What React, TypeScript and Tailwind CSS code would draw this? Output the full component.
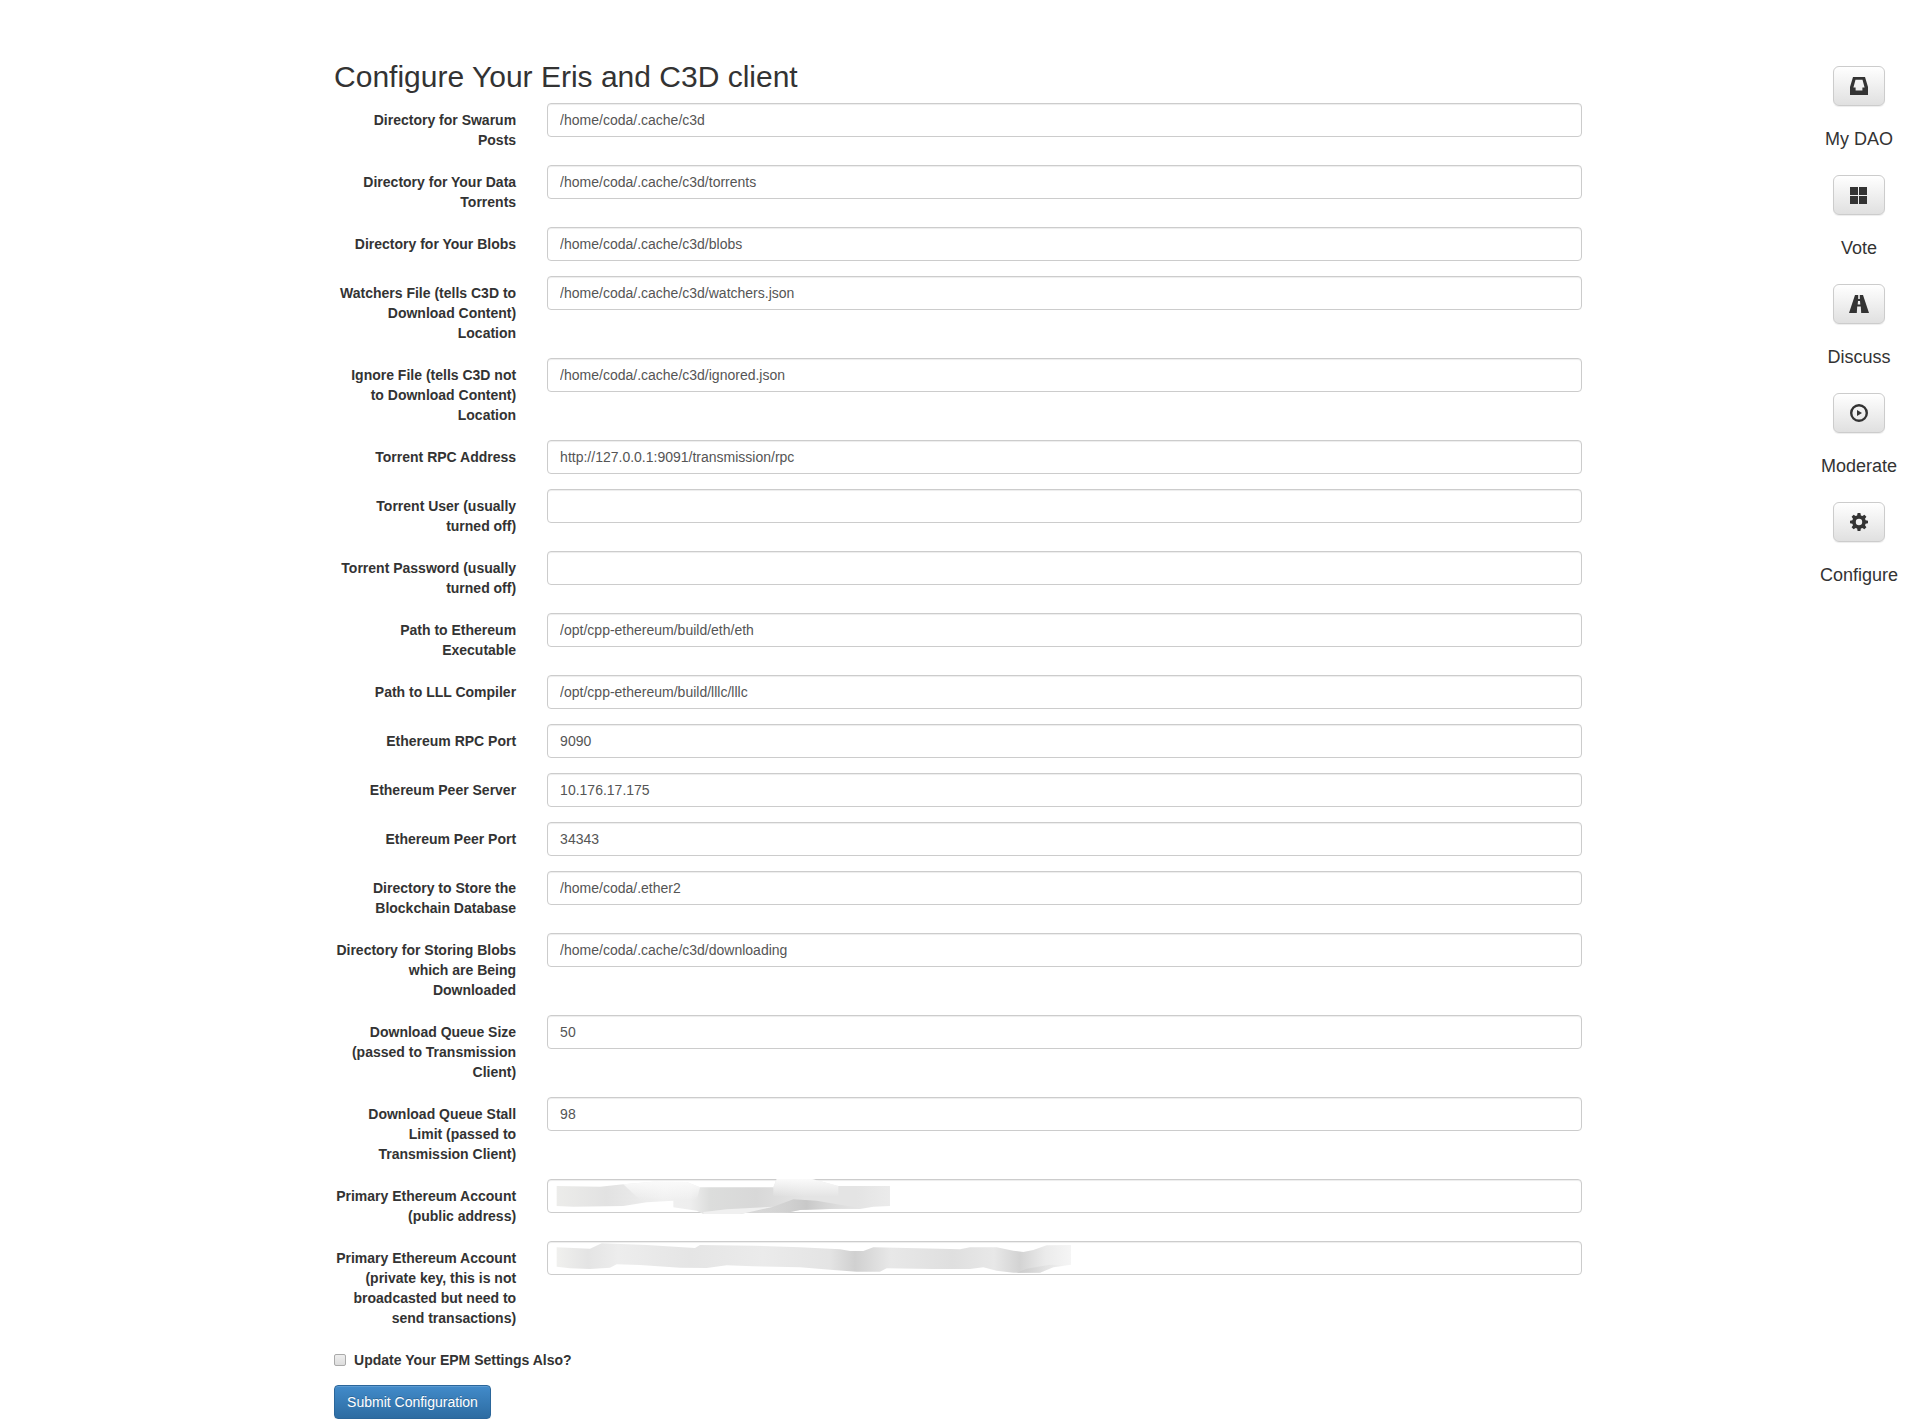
import React from 'react';

type Field = { id: string; label: string; value: string; smudge?: React.ReactNode };

const publicSmudge = (
  <svg viewBox="21 27 1080 108" className="pointer-events-none absolute top-0 left-[15px] h-9 w-[360px]" aria-hidden="true">
    <defs>
      <linearGradient id="pub" gradientUnits="userSpaceOnUse" x1="50" y1="0" x2="1050" y2="0">
        <stop offset="0" stopColor="#ececea" />
        <stop offset="0.15" stopColor="#e2e2e2" />
        <stop offset="0.32" stopColor="#f0f0f0" />
        <stop offset="0.4" stopColor="#eeeeee" />
        <stop offset="0.46" stopColor="#dcdddc" />
        <stop offset="0.6" stopColor="#d8d8d8" />
        <stop offset="0.74" stopColor="#e4e4e4" />
        <stop offset="0.9" stopColor="#e4e4e4" />
        <stop offset="1" stopColor="#ebebeb" />
      </linearGradient>
      <linearGradient id="pubTop" x1="0" y1="0" x2="0" y2="1">
        <stop offset="0" stopColor="#fafafa" />
        <stop offset="1" stopColor="#fafafa" stopOpacity="0" />
      </linearGradient>
      <linearGradient id="pubShade" x1="0" y1="0" x2="1" y2="0">
        <stop offset="0" stopColor="#c8c8c8" stopOpacity="0" />
        <stop offset="0.5" stopColor="#c8c8c8" />
        <stop offset="1" stopColor="#d8d8d8" stopOpacity="0" />
      </linearGradient>
    </defs>
    <path
      fill="url(#pub)"
      d="M50 48L180 50L250 43L340 35L440 36L480 52L700 52L710 27H816L850 36L895 48H1050V108L1000 110L960 117H870L780 120L740 128H620L600 132H490L470 122L400 112V92L320 97L250 108L100 110L50 108Z"
    />
    <path fill="url(#pubTop)" d="M250 43L340 35L440 36L480 52L470 90H300Z" />
    <path fill="url(#pubTop)" d="M700 52L710 27H816L850 36L895 48V80H700Z" />
    <path fill="url(#pubShade)" d="M640 124L700 110L760 88L830 92L900 104L960 114L870 117L780 120L740 128Z" />
    <path fill="#f0f0f0" d="M490 126L560 118L700 110L620 128L600 132H490Z" />
  </svg>
);

const privateSmudge = (
  <svg viewBox="21 213 1620 108" className="pointer-events-none absolute top-0 left-[15px] h-9 w-[540px]" aria-hidden="true">
    <defs>
      <linearGradient id="priv" gradientUnits="userSpaceOnUse" x1="50" y1="0" x2="1593" y2="0">
        <stop offset="0" stopColor="#f0f0ee" />
        <stop offset="0.06" stopColor="#e4e4e4" />
        <stop offset="0.12" stopColor="#ededed" />
        <stop offset="0.26" stopColor="#e5e5e5" />
        <stop offset="0.4" stopColor="#ebebeb" />
        <stop offset="0.53" stopColor="#e4e4e4" />
        <stop offset="0.58" stopColor="#d0d0d0" />
        <stop offset="0.65" stopColor="#e8e8e8" />
        <stop offset="0.77" stopColor="#dfdfdf" />
        <stop offset="0.85" stopColor="#e8e8e8" />
        <stop offset="0.9" stopColor="#d3d3d3" />
        <stop offset="0.95" stopColor="#ebebeb" />
        <stop offset="1" stopColor="#f5f5f5" />
      </linearGradient>
      <linearGradient id="privTail" x1="0" y1="0" x2="1" y2="0">
        <stop offset="0" stopColor="#cccccc" />
        <stop offset="1" stopColor="#e0e0e0" stopOpacity="0" />
      </linearGradient>
    </defs>
    <path
      fill="url(#priv)"
      d="M50 232L150 236L185 220L320 225L465 234L480 225L640 227L780 232L900 238L930 243H970L1000 232L1200 236L1260 238L1290 232H1370L1420 242L1450 246L1480 240L1520 226L1593 225V284L1540 292L1500 308H1420L1370 302L1330 292L1290 297H1180L1040 295L1020 305H950L880 300L780 292L640 289L560 286L500 294L420 293L300 285L230 283L210 293L150 297L90 295L50 290Z"
    />
    <path fill="url(#privTail)" d="M1430 308L1460 296L1530 284L1580 287L1540 292L1500 308Z" />
  </svg>
);

const fields: Field[] = [
  { id: 'swarum', label: 'Directory for Swarum Posts', value: '/home/coda/.cache/c3d' },
  { id: 'torrents', label: 'Directory for Your Data Torrents', value: '/home/coda/.cache/c3d/torrents' },
  { id: 'blobs', label: 'Directory for Your Blobs', value: '/home/coda/.cache/c3d/blobs' },
  { id: 'watchers', label: 'Watchers File (tells C3D to Download Content) Location', value: '/home/coda/.cache/c3d/watchers.json' },
  { id: 'ignore', label: 'Ignore File (tells C3D not to Download Content) Location', value: '/home/coda/.cache/c3d/ignored.json' },
  { id: 'rpc', label: 'Torrent RPC Address', value: 'http://127.0.0.1:9091/transmission/rpc' },
  { id: 'user', label: 'Torrent User (usually turned off)', value: '' },
  { id: 'password', label: 'Torrent Password (usually turned off)', value: '' },
  { id: 'eth', label: 'Path to Ethereum Executable', value: '/opt/cpp-ethereum/build/eth/eth' },
  { id: 'lll', label: 'Path to LLL Compiler', value: '/opt/cpp-ethereum/build/lllc/lllc' },
  { id: 'ethport', label: 'Ethereum RPC Port', value: '9090' },
  { id: 'peer', label: 'Ethereum Peer Server', value: '10.176.17.175' },
  { id: 'peerport', label: 'Ethereum Peer Port', value: '34343' },
  { id: 'chain', label: 'Directory to Store the Blockchain Database', value: '/home/coda/.ether2' },
  { id: 'downloading', label: 'Directory for Storing Blobs which are Being Downloaded', value: '/home/coda/.cache/c3d/downloading' },
  { id: 'queue', label: 'Download Queue Size (passed to Transmission Client)', value: '50' },
  { id: 'stall', label: 'Download Queue Stall Limit (passed to Transmission Client)', value: '98' },
  { id: 'public', label: 'Primary Ethereum Account (public address)', value: '', smudge: publicSmudge },
  {
    id: 'private',
    label: 'Primary Ethereum Account (private key, this is not broadcasted but need to send transactions)',
    value: '',
    smudge: privateSmudge,
  },
];

const nav = [
  {
    name: 'My DAO',
    icon: <path fillRule="evenodd" d="M3 0h12l3 10v8H0v-8zM5.500 2.800L3.400 10.500H5.600v3h6.800v-3h2.200L12.500 2.800z" />,
  },
  {
    name: 'Vote',
    icon: <path d="M0 1h8v8H0zM9 1h8v8H9zM0 10h8v8H0zM9 10h8v8H9z" />,
  },
  {
    name: 'Discuss',
    icon: (
      <path
        fillRule="evenodd"
        d="M5 0L-1 18H6.800L7.200 11.500H10.800L11.200 18H19L13 0H9.800V4H8.200V0zM8 6L7.700 9.500H10.300L10 6z"
      />
    ),
  },
  {
    name: 'Moderate',
    icon: (
      <>
        <circle cx="9" cy="9" r="7.800" fill="none" stroke="#333" strokeWidth="2.400" />
        <path d="M7 6v6l5-3z" />
      </>
    ),
  },
  {
    name: 'Configure',
    icon: (
      <path
        fillRule="evenodd"
        d="M7.600 0h2.800l.5 2.500 1.500.6 2-1.400 2 2-1.400 2 .6 1.500 2.400.5v2.600l-2.400.5-.6 1.500 1.400 2-2 2-2-1.400-1.500.6-.5 2.500H7.600l-.5-2.500-1.500-.6-2 1.400-2-2 1.400-2-.6-1.500L0 10.300V7.700l2.400-.5.6-1.500-1.400-2 2-2 2 1.400 1.500-.6zM9 5.800a3.200 3.200 0 1 0 0 6.400 3.200 3.200 0 0 0 0-6.400z"
      />
    ),
  },
];

export default function App() {
  return (
    <div className="flex items-start bg-white pt-[60px] font-['Liberation_Sans',Arial,sans-serif] text-sm leading-5 text-[#333]">
      <main className="ml-[16.75%] w-[67.1%]">
        <h1 className="mb-[10px] px-[15px] text-[30px] leading-[33px] font-normal">Configure Your Eris and C3D client</h1>
        <form onSubmit={(e) => e.preventDefault()}>
          {fields.map((f) => (
            <div key={f.id} className="mb-[15px] grid grid-cols-6">
              <label htmlFor={f.id} className="px-4 pt-[7px] text-right font-bold">
                {f.label}
              </label>
              <div className="relative col-span-5 px-[15px]">
                <input
                  id={f.id}
                  type="text"
                  defaultValue={f.value}
                  className="block h-[34px] w-full rounded border border-[#ccc] bg-white px-3 text-sm text-[#555] shadow-[inset_0_1px_1px_rgba(0,0,0,0.075)] outline-none"
                />
                {f.smudge}
              </div>
            </div>
          ))}
          <div className="mb-[15px] px-[15px] pt-[7px]">
            <label className="flex items-center gap-2 font-bold">
              <input
                type="checkbox"
                className="size-3 appearance-none rounded-xs border border-[#aaa] bg-linear-to-b from-[#eee] to-[#ddd]"
              />
              Update Your EPM Settings Also?
            </label>
          </div>
          <button
            type="submit"
            className="ml-[15px] rounded border border-[#2b669a] bg-linear-to-b from-[#428bca] to-[#2d6ca2] px-3 py-[6px] text-white shadow-[inset_0_1px_0_rgba(255,255,255,0.15),0_1px_1px_rgba(0,0,0,0.075)] [text-shadow:0_-1px_0_rgba(0,0,0,0.2)]"
          >
            Submit Configuration
          </button>
        </form>
      </main>
      <nav className="mt-[6px] mr-[7px] ml-auto flex flex-col items-center text-center text-lg leading-5">
        {nav.map((n) => (
          <div key={n.name} className="flex h-[109px] flex-col items-center">
            <button
              type="button"
              aria-label={n.name}
              className="mb-[23px] flex h-10 w-[52px] items-center justify-center rounded-md border border-[#ccc] bg-linear-to-b from-white to-[#e0e0e0] shadow-[inset_0_1px_0_rgba(255,255,255,0.15),0_1px_1px_rgba(0,0,0,0.075)]"
            >
              <svg viewBox="0 0 18 18" className="size-[18px] overflow-visible fill-[#333]" aria-hidden="true">
                {n.icon}
              </svg>
            </button>
            <span>{n.name}</span>
          </div>
        ))}
      </nav>
    </div>
  );
}
